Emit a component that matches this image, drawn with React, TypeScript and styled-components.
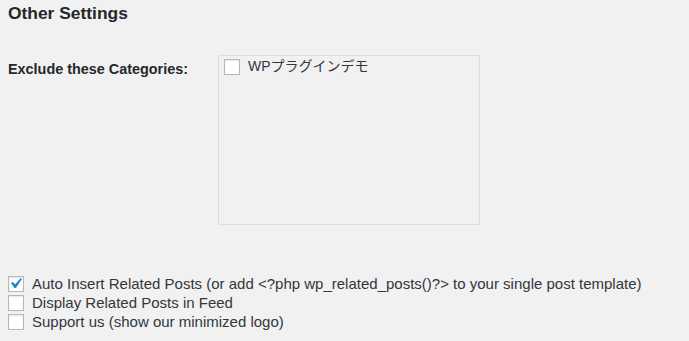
import React from 'react';
import styled, { createGlobalStyle } from 'styled-components';

const GlobalStyle = createGlobalStyle`
  html, body {
    margin: 0;
    padding: 0;
    background: #f1f1f1;
  }
  body {
    font-family: "Liberation Sans", "Noto Sans CJK JP", Arial, sans-serif;
    color: #23282d;
  }
`;

const Page = styled.div`
  padding: 1px 8px 0;
`;

const Heading = styled.h2`
  margin: 0;
  font-size: 17.4px;
  line-height: 24px;
  font-weight: 700;
`;

const FormRow = styled.div`
  display: flex;
  margin-top: 30px;
`;

const RowLabel = styled.div`
  width: 210px;
  flex: none;
  padding-top: 4px;
  font-size: 14.4px;
  line-height: 20px;
  font-weight: 700;
`;

const Checklist = styled.div`
  box-sizing: border-box;
  width: 262px;
  height: 170px;
  border: 1px solid #dddddd;
  padding: 1px 5px;
`;

const Option = styled.label<{ $size?: number }>`
  display: flex;
  align-items: center;
  gap: 8px;
  font-size: ${({ $size }) => $size ?? 15}px;
  line-height: 19px;
  color: #32373c;
`;

const OptionList = styled.div`
  margin-top: 49px;
  display: flex;
  flex-direction: column;
`;

const Box = styled.span`
  position: relative;
  box-sizing: border-box;
  flex: none;
  width: 16px;
  height: 16px;
  background: #ffffff;
  border: 1px solid #b4b9be;
  box-shadow: inset 0 1px 2px rgba(0, 0, 0, 0.1);
`;

const Tick = styled.svg`
  position: absolute;
  left: -4px;
  top: -4px;
  width: 21px;
  height: 21px;
`;

const Checkbox: React.FC<{ checked?: boolean }> = ({ checked }) => (
  <Box>
    {checked && (
      <Tick viewBox="0 0 20 20">
        <path fill="#1e8cbe" d="M14.83 4.89l1.34.94-5.81 8.38H9.02L5.78 9.67l1.34-1.25 2.57 2.4z" />
      </Tick>
    )}
  </Box>
);

export default function App() {
  return (
    <Page>
      <GlobalStyle />
      <Heading>Other Settings</Heading>
      <FormRow>
        <RowLabel>Exclude these Categories:</RowLabel>
        <Checklist>
          <Option $size={14}>
            <Checkbox />
            WPプラグインデモ
          </Option>
        </Checklist>
      </FormRow>
      <OptionList>
        <Option>
          <Checkbox checked />
          Auto Insert Related Posts (or add &lt;?php wp_related_posts()?&gt; to your single post template)
        </Option>
        <Option>
          <Checkbox />
          Display Related Posts in Feed
        </Option>
        <Option>
          <Checkbox />
          Support us (show our minimized logo)
        </Option>
      </OptionList>
    </Page>
  );
}
